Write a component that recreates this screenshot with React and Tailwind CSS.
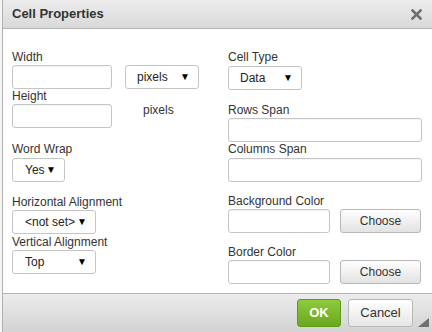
import React from 'react';

const Label = ({ children, className = '' }) => (
  <div className={`h-[16px] leading-[16px] text-[12px] text-[#333] ${className}`}>{children}</div>
);

const TextBox = ({ className = '' }) => (
  <div className={`h-[24px] border border-[#c5c5c5] rounded-[3px] bg-white shadow-[inset_0_1px_1px_rgba(0,0,0,0.04)] ${className}`} />
);

const Select = ({ value, className = '' }) => (
  <div className={`h-[24px] flex items-center justify-between pl-[11px] pr-[8px] border border-[#c5c5c5] rounded-[3px] bg-white text-[12px] text-[#222] ${className}`}>
    <span>{value}</span>
    <span className="text-[10px] leading-none text-black">▼</span>
  </div>
);

const ChooseButton = () => (
  <div className="w-[81px] h-[24px] flex items-center justify-center border border-[#b8b8b8] rounded-[3px] bg-gradient-to-b from-[#ffffff] to-[#e2e2e2] text-[12px] text-[#333]">
    Choose
  </div>
);

export default function App() {
  return (
    <div className="w-[432px] h-[332px] bg-[#f4f4f4] pl-[2px] font-['Liberation_Sans',Arial,sans-serif] overflow-hidden">
      <div className="h-full flex flex-col border-l border-[#b0b0b0] bg-white relative">
        {/* Title bar */}
        <div className="h-[29px] shrink-0 flex items-center justify-between pl-[9px] pr-[10px] border-b border-[#b5b5b5] bg-gradient-to-b from-[#ececec] to-[#d9d9d9]">
          <span className="text-[13px] font-bold text-[#333]">Cell Properties</span>
          <svg width="11" height="11" viewBox="0 0 11 11">
            <path d="M1.5 1.5 L9.5 9.5 M9.5 1.5 L1.5 9.5" stroke="#6e6e6e" strokeWidth="2.6" strokeLinecap="square" />
          </svg>
        </div>

        {/* Body */}
        <div className="flex-1 flex pt-[20px] pl-[9px]">
          {/* Left column */}
          <div className="w-[216px] flex flex-col">
            <Label>Width</Label>
            <div className="flex items-center gap-[13px]">
              <TextBox className="w-[100px] h-[23px]" />
              <Select value="pixels" className="w-[74px]" />
            </div>
            <Label className="-mt-[1px]">Height</Label>
            <div className="flex gap-[31px]">
              <TextBox className="w-[100px] h-[23px]" />
              <span className="text-[12px] text-[#333] leading-[14px] -mt-[1px]">pixels</span>
            </div>
            <Label className="mt-[13px]">Word Wrap</Label>
            <Select value="Yes" className="w-[53px] mt-[1px] pl-[12px] pr-[6px]" />
            <Label className="mt-[12px]">Horizontal Alignment</Label>
            <Select value="<not set>" className="w-[84px] pl-[12px]" />
            <Label>Vertical Alignment</Label>
            <Select value="Top" className="w-[84px] pl-[12px] h-[23px]" />
          </div>

          {/* Right column */}
          <div className="w-[194px] flex flex-col">
            <Label>Cell Type</Label>
            <Select value="Data" className="w-[74px] mt-[1px]" />
            <Label className="mt-[12px]">Rows Span</Label>
            <TextBox className="w-[194px]" />
            <Label className="-mt-[1px]">Columns Span</Label>
            <TextBox className="w-[194px] mt-[1px]" />
            <Label className="mt-[11px]">Background Color</Label>
            <div className="flex gap-[10px]">
              <TextBox className="w-[102px]" />
              <ChooseButton />
            </div>
            <Label className="mt-[11px]">Border Color</Label>
            <div className="flex gap-[10px]">
              <TextBox className="w-[102px]" />
              <ChooseButton />
            </div>
          </div>
        </div>

        {/* Footer */}
        <div className="h-[39px] shrink-0 flex items-start justify-end gap-[7px] pt-[5px] pr-[19px] border-t border-[#b5b5b5] bg-gradient-to-b from-[#ececec] to-[#d3d3d3]">
          <div className="w-[44px] h-[28px] flex items-center justify-center rounded-[3px] border border-[#5e9a16] bg-gradient-to-b from-[#8fca3f] to-[#6aa81f] text-white text-[13px] font-bold">
            OK
          </div>
          <div className="w-[65px] h-[28px] flex items-center justify-center rounded-[3px] border border-[#b8b8b8] bg-gradient-to-b from-[#ffffff] to-[#e6e6e6] text-[13px] text-[#333]">
            Cancel
          </div>
        </div>
        <svg className="absolute right-[3px] bottom-[5px]" width="11" height="9" viewBox="0 0 11 9">
          <path d="M11 0 L11 9 L0 9 Z" fill="#6f6f6f" />
        </svg>
      </div>
    </div>
  );
}
